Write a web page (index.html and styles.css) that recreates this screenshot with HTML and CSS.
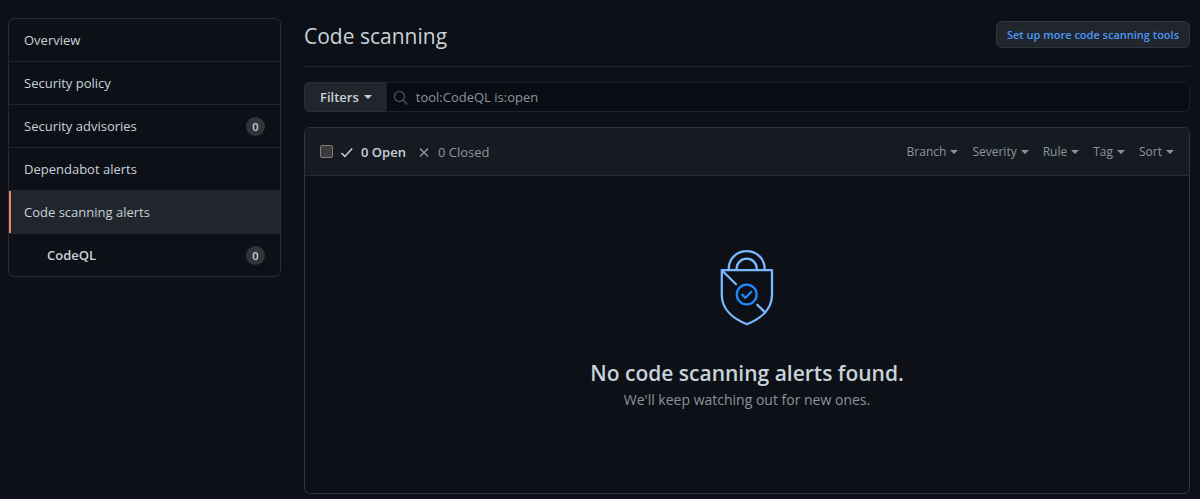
FILE: index.html
```html
<!DOCTYPE html>
<html lang="en">
<head>
<meta charset="utf-8">
<title>Code scanning</title>
<link rel="stylesheet" href="styles.css">
</head>
<body>
<div class="layout">
  <nav class="menu" aria-label="Security">
    <a class="menu-item" href="#">Overview</a>
    <a class="menu-item" href="#">Security policy</a>
    <a class="menu-item" href="#">Security advisories <span class="counter">0</span></a>
    <a class="menu-item" href="#">Dependabot alerts</a>
    <a class="menu-item selected" href="#" aria-current="page">Code scanning alerts</a>
    <a class="menu-item nested" href="#">CodeQL <span class="counter">0</span></a>
  </nav>
  <main class="content">
    <header class="subhead">
      <h1 class="title">Code scanning</h1>
      <a class="setup" href="#">Set up more code scanning tools</a>
    </header>
    <form class="search">
      <button class="filters" type="button">Filters <span class="caret"></span></button>
      <label class="search-field">
        <svg class="search-icon" viewBox="0 0 16 16" width="15" height="15" aria-hidden="true"><circle cx="6.9" cy="6.9" r="5.4"/><path d="M10.9 10.9l4 4"/></svg>
        <input class="search-input" type="text" aria-label="Search alerts" value="tool:CodeQL is:open">
      </label>
    </form>
    <section class="box">
      <div class="box-header">
        <input class="check-all" type="checkbox" aria-label="Select all alerts">
        <a class="state active" href="#"><svg class="state-icon" viewBox="0 0 14 14" width="14" height="14" aria-hidden="true"><path d="M1.5 8l3.4 3.4 7.3-8"/></svg>0 Open</a>
        <a class="state" href="#"><svg class="state-icon" viewBox="0 0 14 14" width="14" height="14" aria-hidden="true"><path d="M3 3.500l8 8M11 3.500l-8 8"/></svg>0 Closed</a>
        <div class="menus">
          <button class="menu-button" type="button">Branch<span class="caret"></span></button>
          <button class="menu-button" type="button">Severity<span class="caret"></span></button>
          <button class="menu-button" type="button">Rule<span class="caret"></span></button>
          <button class="menu-button" type="button">Tag<span class="caret"></span></button>
          <button class="menu-button" type="button">Sort<span class="caret"></span></button>
        </div>
      </div>
      <div class="blank">
        <svg class="shield" viewBox="30 14 54 77" width="54" height="77" aria-hidden="true">
          <path d="M38.8 35v-1.5a17.9 17.4 0 0 1 35.8 0V35M46.6 35v-1.5a10.1 9.8 0 0 1 20.2 0V35"/>
          <path d="M31.8 35.2h50.2V60c0 13.5-10.5 23.500-25.1 29.200C42.300 83.500 31.800 73.500 31.800 60z"/>
          <path d="M32.500 36L46 49.200M67.300 69.700l7.800 7.700"/>
          <g class="shield-mark"><circle cx="56.700" cy="59.500" r="9.900"/><path d="M52.300 59.700l3.200 3.100 5.900-6"/></g>
        </svg>
        <h2 class="blank-title">No code scanning alerts found.</h2>
        <p class="blank-text">We'll keep watching out for new ones.</p>
      </div>
    </section>
  </main>
</div>
</body>
</html>
```
FILE: styles.css
```css
* { box-sizing: border-box; }
body {
  margin: 0;
  background: #0d1117;
  color: #c9d1d9;
  font: 13px/20px "Open Sans", "Noto Sans", sans-serif;
}
a { color: inherit; text-decoration: none; }
button, input { font: inherit; color: inherit; }
.layout {
  display: grid;
  grid-template-columns: 273px 1fr;
  align-items: start;
  gap: 23px;
  padding: 18px 10px 6px 8px;
}
.menu { border: 1px solid #272c33; border-radius: 6px; overflow: hidden; }
.menu-item {
  display: flex;
  align-items: center;
  justify-content: space-between;
  height: 43px;
  padding: 0 15px;
  border-bottom: 1px solid #21262d;
}
.menu-item:last-child { height: 42px; border-bottom: 0; }
.selected { background: #21262d; box-shadow: inset 2px 0 #f78166; }
.menu-item.nested { padding-left: 38px; font-weight: 600; }
.counter {
  min-width: 19px;
  padding: 0 6px;
  border-radius: 10px;
  background: #30353c;
  font-size: 11px;
  font-weight: 600;
  line-height: 19px;
  text-align: center;
}
.subhead {
  display: flex;
  align-items: flex-start;
  justify-content: space-between;
  height: 49px;
  border-bottom: 1px solid #21262d;
}
.title { margin: 0; font-size: 21px; font-weight: 400; line-height: 36px; }
.setup {
  margin-top: 3px;
  padding: 0 10px;
  border: 1px solid #30363d;
  border-radius: 6px;
  background: #21262d;
  color: #4a98f5;
  font-size: 11px;
  font-weight: 600;
  line-height: 25px;
}
.search { display: flex; height: 30px; margin: 15px 0; }
.filters {
  display: flex;
  align-items: center;
  gap: 5px;
  padding: 0 14px 0 15px;
  border: 1px solid #2b3138;
  border-right: 0;
  border-radius: 6px 0 0 6px;
  background: #21262d;
  font-weight: 600;
}
.search-field {
  display: flex;
  flex: 1;
  align-items: center;
  gap: 8px;
  padding: 0 6px;
  border: 1px solid #1e232a;
  border-radius: 0 6px 6px 0;
  background: #090c12;
}
.search-icon { fill: none; stroke: #484e56; stroke-width: 1.5; stroke-linecap: round; }
.search-input { flex: 1; padding: 0; border: 0; outline: 0; background: none; color: #8b949e; }
.caret {
  border: 4px solid transparent;
  border-top-color: currentColor;
  border-bottom: 0;
}
.box { border: 1px solid #30363d; border-radius: 6px; overflow: hidden; }
.box-header {
  display: flex;
  align-items: center;
  height: 48px;
  padding: 0 15px;
  border-bottom: 1px solid #272c33;
  background: #161b22;
}
.check-all {
  appearance: none;
  width: 13px;
  height: 13px;
  margin: 0 7px 0 0;
  border: 1px solid #7c7c7c;
  border-radius: 2px;
  background: #3b3b3b;
}
.state { display: flex; align-items: center; gap: 7px; margin-right: 11px; color: #8b949e; }
.state-icon { fill: none; stroke: currentColor; stroke-width: 1.5; }
.active { color: #c9d1d9; font-weight: 600; }
.menus { display: flex; gap: 14px; margin-left: auto; }
.menu-button {
  display: flex;
  align-items: center;
  gap: 4px;
  padding: 0;
  border: 0;
  background: none;
  color: #8b949e;
  font-size: 12px;
}
.blank {
  display: flex;
  flex-direction: column;
  align-items: center;
  padding: 73px 30px 83px;
}
.shield { fill: none; stroke: #79b8ff; stroke-width: 2.3; stroke-linecap: round; stroke-linejoin: round; }
.shield-mark { stroke: #2188ff; }
.blank-title { margin: 31px 0 0; font-size: 21px; font-weight: 600; line-height: 33px; }
.blank-text { margin: 0; color: #8b949e; font-size: 14px; line-height: 20px; }
```
